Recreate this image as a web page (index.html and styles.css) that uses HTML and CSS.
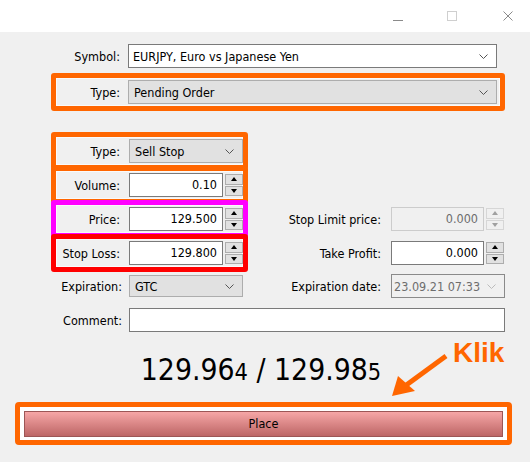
FILE: index.html
```html
<!DOCTYPE html>
<html>
<head>
<meta charset="utf-8">
<link rel="stylesheet" href="styles.css">
</head>
<body>
<div class="titlebar">
  <span class="tb tb-min"></span>
  <span class="tb tb-max"></span>
  <svg class="tb tb-close" width="10" height="10" viewBox="0 0 10 10"><path d="M0.5 0.5 L9.5 9.5 M9.5 0.5 L0.5 9.5" stroke="#8a8a8a" stroke-width="1" fill="none"/></svg>
</div>

<div class="form">
  <div class="row top-row">
    <span class="lbl">Symbol:</span>
    <div class="combo edit w-sym">EURJPY, Euro vs Japanese Yen<svg class="chev" width="9" height="5" viewBox="0 0 9 5"><polyline points="0.5,0.5 4.5,4.5 8.5,0.5" stroke="#555" fill="none"/></svg></div>
  </div>

  <div class="box hl-orange box-wide">
    <div class="row">
      <span class="lbl">Type:</span>
      <div class="combo list w-sym">Pending Order<svg class="chev" width="9" height="5" viewBox="0 0 9 5"><polyline points="0.5,0.5 4.5,4.5 8.5,0.5" stroke="#555" fill="none"/></svg></div>
    </div>
  </div>

  <div class="mid">
    <div class="box hl-orange lbox r1">
      <div class="row">
        <span class="lbl">Type:</span>
        <div class="combo list w-small">Sell Stop<svg class="chev" width="9" height="5" viewBox="0 0 9 5"><polyline points="0.5,0.5 4.5,4.5 8.5,0.5" stroke="#555" fill="none"/></svg></div>
      </div>
    </div>
    <div class="box hl-orange lbox r2">
      <div class="row">
        <span class="lbl">Volume:</span>
        <div class="field w-num">0.10</div>
        <div class="spin"><span class="up"></span><span class="dn"></span></div>
      </div>
    </div>
    <div class="box hl-magenta lbox r3">
      <div class="row">
        <span class="lbl">Price:</span>
        <div class="field w-num">129.500</div>
        <div class="spin"><span class="up"></span><span class="dn"></span></div>
      </div>
    </div>
    <div class="box hl-red lbox r4">
      <div class="row">
        <span class="lbl">Stop Loss:</span>
        <div class="field w-num">129.800</div>
        <div class="spin"><span class="up"></span><span class="dn"></span></div>
      </div>
    </div>
    <div class="row plain r5">
      <span class="lbl lbl-wide">Expiration:</span>
      <div class="combo list w-small gtc">GTC<svg class="chev" width="9" height="5" viewBox="0 0 9 5"><polyline points="0.5,0.5 4.5,4.5 8.5,0.5" stroke="#555" fill="none"/></svg></div>
    </div>

    <div class="row rcell rr3">
      <span class="rlbl">Stop Limit price:</span>
      <div class="field w-rnum disabled">0.000</div>
      <div class="spin spin-r disabled"><span class="up"></span><span class="dn"></span></div>
    </div>
    <div class="row rcell rr4">
      <span class="rlbl">Take Profit:</span>
      <div class="field w-rnum">0.000</div>
      <div class="spin spin-r"><span class="up"></span><span class="dn"></span></div>
    </div>
    <div class="row rcell rr5">
      <span class="rlbl">Expiration date:</span>
      <div class="combo date w-date">23.09.21 07:33<svg class="chev" width="9" height="5" viewBox="0 0 9 5"><polyline points="0.5,0.5 4.5,4.5 8.5,0.5" stroke="#bbb" fill="none"/></svg></div>
    </div>
  </div>

  <div class="row plain comment-row">
    <span class="lbl lbl-wide">Comment:</span>
    <div class="field w-comment"></div>
  </div>

  <div class="quote">129.96<span class="small">4</span> / 129.98<span class="small">5</span></div>
</div>

<div class="place-wrap">
  <div class="place-btn">Place</div>
</div>

<div class="klik">Klik</div>
<svg class="arrow" width="70" height="50" viewBox="0 0 70 50">
  <line x1="61" y1="6" x2="20" y2="36" stroke="#ff6600" stroke-width="5"/>
  <polygon points="7,46 13,26 30,41" fill="#ff6600"/>
</svg>
</body>
</html>
```

FILE: styles.css
```css
* { box-sizing: border-box; }
html, body { margin: 0; padding: 0; }
body {
  width: 530px;
  height: 462px;
  background: #f0f0f0;
  font-family: "DejaVu Sans Condensed", "DejaVu Sans", sans-serif;
  font-stretch: condensed;
  font-size: 12.5px;
  color: #000;
  overflow: hidden;
  position: relative;
}

/* title bar */
.titlebar {
  height: 32px;
  background: #fff;
  display: flex;
  align-items: center;
  justify-content: flex-end;
  padding-right: 17px;
}
.tb { display: block; width: 10px; height: 10px; }
.tb-min { border-top: 1px solid #8a8a8a; height: 1px; margin-top: 8px; }
.tb-max { border: 1px solid #cfcfcf; margin-left: 44px; }
.tb-close { margin-left: 46px; }

/* form */
.form { padding: 12px 0 0 51px; }
.row { display: flex; align-items: center; }
.lbl { width: 64px; text-align: right; margin-right: 9px; white-space: nowrap; }
.lbl-wide { width: 66px; margin-right: 7px; }
.top-row { padding-left: 5px; margin-bottom: 5px; }
.top-row .lbl, .box-wide .lbl { margin-right: 8px; }

.box {
  border: 5px solid transparent;
  border-radius: 3px;
  padding: 2px 0;
  box-shadow: inset 0 0 0 1px #fafafa;
}
.hl-orange { border-color: #ff6600; }
.hl-magenta { border-color: #ff00ff; }
.hl-red { border-color: #ff0000; }
.box-wide { width: 454px; }

.combo {
  height: 24px;
  display: flex;
  align-items: center;
  justify-content: space-between;
  padding: 0 8px 0 5px;
  white-space: nowrap;
}
.combo.edit { background: #fff; border: 1px solid #7a7a7a; padding-left: 4px; }
.combo.list { background: #e1e1e1; border: 1px solid #adadad; }
.combo.date { background: #f0f0f0; border: 1px solid #8a8a8a; color: #6d6d6d; padding-left: 2px; }
.chev { flex: none; }
.w-sym { width: 369px; }
.w-small { width: 114px; }
.gtc { height: 22px; }
.w-date { width: 114px; height: 24px; }

.field {
  height: 24px;
  background: #fff;
  border: 1px solid #7a7a7a;
  text-align: right;
  padding-right: 5px;
  line-height: 22px;
}
.field.disabled { background: #f0f0f0; border-color: #cccccc; color: #6d6d6d; }
.w-num { width: 94px; }
.w-rnum { width: 93px; }
.w-comment { width: 376px; }

.spin {
  width: 18px;
  height: 22px;
  margin-left: 2px;
  display: flex;
  flex-direction: column;
  gap: 1px;
}
.spin span {
  flex: 1;
  background: #e1e1e1;
  border: 1px solid #adadad;
  display: flex;
  align-items: center;
  justify-content: center;
}
.spin span::after {
  content: "";
  width: 0; height: 0;
  border-left: 3.5px solid transparent;
  border-right: 3.5px solid transparent;
}
.spin .up::after { border-bottom: 4px solid #000; }
.spin .dn::after { border-top: 4px solid #000; }
.spin.disabled span { background: #f0f0f0; border-color: #d6d6d6; }
.spin.disabled .up::after { border-bottom-color: #a0a0a0; }
.spin.disabled .dn::after { border-top-color: #a0a0a0; }

/* middle grid */
.mid {
  margin-top: 21px;
  display: grid;
  grid-template-columns: 197px 257px;
  grid-template-rows: 34px 34px 34px 34px 36px;
}
.lbox { grid-column: 1; height: 38px; margin-bottom: -4px; }
.r1 { grid-row: 1; }
.r2 { grid-row: 2; }
.r3 { grid-row: 3; }
.r4 { grid-row: 4; }
.r5 { grid-row: 5; grid-column: 1; padding-left: 5px; align-self: center; }

.rcell { grid-column: 2; align-self: start; padding-top: 7px; }
.rr3 { grid-row: 3; }
.rr4 { grid-row: 4; }
.rr5 { grid-row: 5; align-self: center; padding-top: 0; }
.rlbl { width: 133px; text-align: right; margin-right: 10px; white-space: nowrap; }

.comment-row { margin-top: 4px; padding-left: 5px; }

/* quote */
.quote {
  margin: 21px 0 0 -51px;
  width: 530px;
  padding-right: 8px;
  height: 34px;
  line-height: 34px;
  text-align: center;
  font-size: 29.8px;
  color: #000;
}
.quote .small { font-size: 23.4px; }

/* place button */
.place-wrap {
  margin: 15px 0 0 15px;
  width: 497px;
  border: 5px solid #ff6600;
  border-radius: 4px;
  background: #fff;
  padding: 4px 4px 3px 4px;
}
.place-btn {
  height: 26px;
  border: 1px solid #9c5656;
  background: linear-gradient(#f6a6a6, #bd6666);
  text-align: center;
  line-height: 24px;
  font-size: 12.5px;
}

/* annotation */
.klik {
  position: absolute;
  left: 453px;
  top: 339px;
  font-family: "Liberation Sans", Arial, sans-serif;
  font-stretch: normal;
  font-weight: bold;
  font-size: 28px;
  line-height: 28px;
  color: #ff6600;
}
.arrow { position: absolute; left: 385px; top: 350px; }
```
